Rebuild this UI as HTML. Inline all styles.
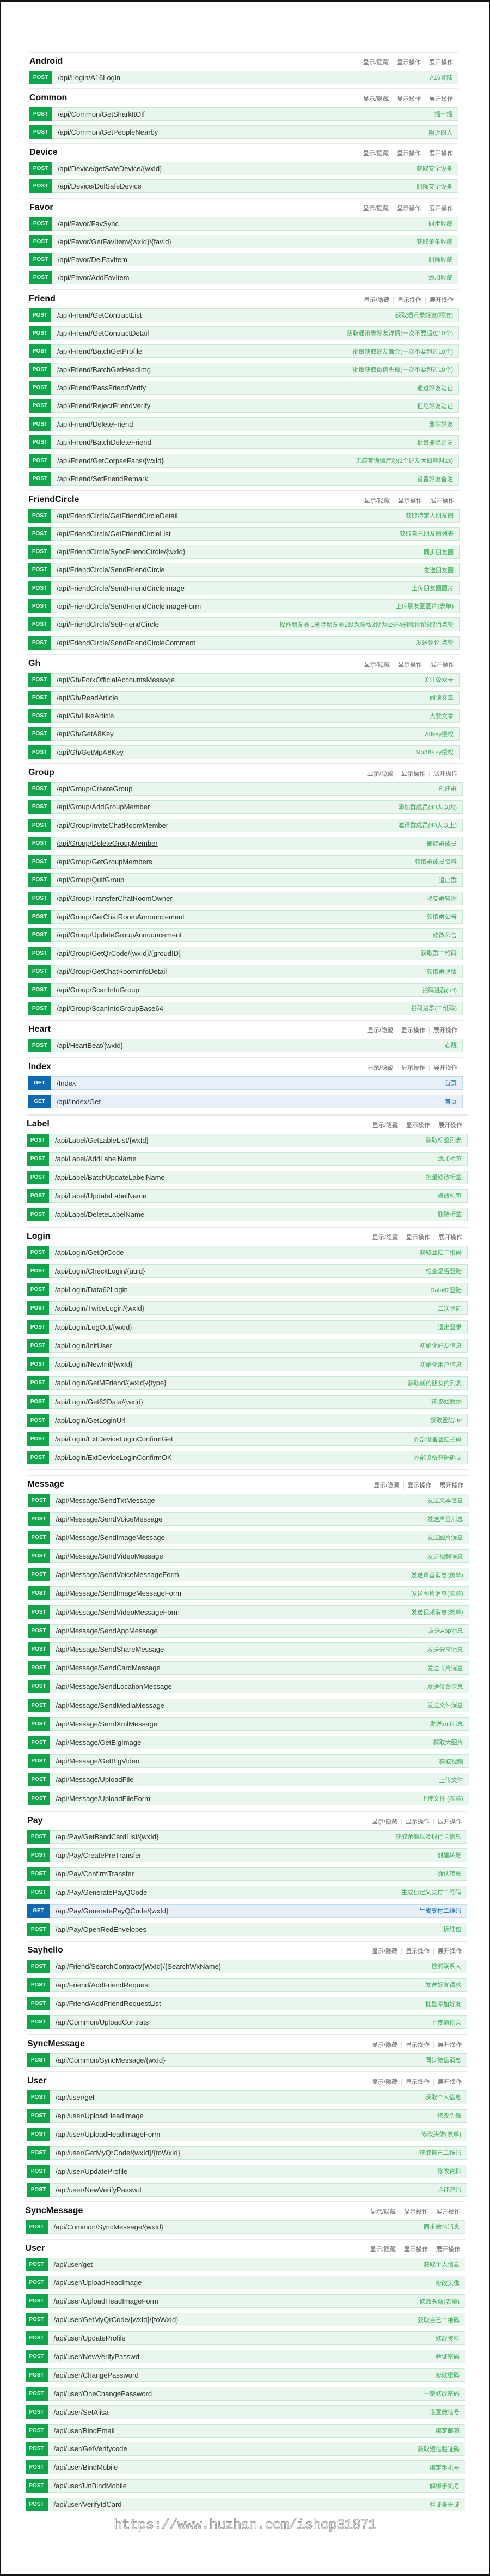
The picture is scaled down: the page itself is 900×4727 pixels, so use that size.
<!DOCTYPE html>
<html><head><meta charset="utf-8">
<style>
html,body{margin:0;padding:0;background:#fff}
body{width:900px;height:4727px;position:relative;overflow:hidden;font-family:"Liberation Sans","Noto Sans CJK SC",sans-serif}
.frame{position:absolute;left:0;top:0;width:900px;height:4727px;box-sizing:border-box;border:2px solid #111;border-top-width:3px;border-bottom-width:3px}
.s{position:absolute}
.ln{height:2px;background:#e9e9e9}
.h{height:32.5px;position:relative}
.h b{position:absolute;left:0;top:1px;font:bold 16px/30px "Liberation Sans","Noto Sans CJK SC",sans-serif;color:#111}
.lk{position:absolute;right:10px;top:10px;font-size:11px;color:#666;line-height:16px;white-space:nowrap}
.lk span+span{border-left:1px solid #ddd;margin-left:7px;padding-left:7px}
.r{height:25px;box-sizing:border-box;border:1px solid #c7e9d4;background:#e8f6ee;display:flex;align-items:center;margin-bottom:calc(var(--p) - 25px);white-space:nowrap}
.m{width:41px;height:25px;margin:-1px 0 -1px -1px;background:#10a54a;color:#fff;font:bold 10px/25px "Liberation Sans",sans-serif;text-align:center;flex:none}
.pa{margin-left:11px;font-size:13px;color:#333}
.d{margin-left:auto;padding-right:10px;font-size:11px;color:#3fa95b}
.g{border-color:#c3d9ec;background:#e7eff8}
.g .m{background:#0f6ab4}
.g .d{color:#0f6ab4}
.u{text-decoration:underline}
.wm{position:absolute;left:0;width:900px;top:4617px;text-align:center;font:26px/32px "Liberation Mono",monospace;color:#f4f4f4;-webkit-text-stroke:1px #9a9a9a;letter-spacing:-1px}
</style></head><body>
<div class="frame"></div>

<div class="s" style="top:95px;left:54px;width:788px;--p:33.5px">
<div class="ln"></div><div class="h"><b>Android</b><div class="lk"><span>显示/隐藏</span><span>显示操作</span><span>展开操作</span></div></div>
<div class="r"><div class="m">POST</div><div class="pa">/api/Login/A16Login</div><div class="d">A16登陆</div></div>
</div>

<div class="s" style="top:162px;left:54px;width:788px;--p:33.5px">
<div class="ln"></div><div class="h"><b>Common</b><div class="lk"><span>显示/隐藏</span><span>显示操作</span><span>展开操作</span></div></div>
<div class="r"><div class="m">POST</div><div class="pa">/api/Common/GetSharkItOff</div><div class="d">摇一摇</div></div>
<div class="r"><div class="m">POST</div><div class="pa">/api/Common/GetPeopleNearby</div><div class="d">附近的人</div></div>
</div>

<div class="s" style="top:262px;left:54px;width:788px;--p:32.7px">
<div class="ln"></div><div class="h"><b>Device</b><div class="lk"><span>显示/隐藏</span><span>显示操作</span><span>展开操作</span></div></div>
<div class="r"><div class="m">POST</div><div class="pa">/api/Device/getSafeDevice/{wxId}</div><div class="d">获取安全设备</div></div>
<div class="r"><div class="m">POST</div><div class="pa">/api/Device/DelSafeDevice</div><div class="d">删除安全设备</div></div>
</div>

<div class="s" style="top:363px;left:54px;width:788px;--p:33px">
<div class="ln"></div><div class="h"><b>Favor</b><div class="lk"><span>显示/隐藏</span><span>显示操作</span><span>展开操作</span></div></div>
<div class="r"><div class="m">POST</div><div class="pa">/api/Favor/FavSync</div><div class="d">同步收藏</div></div>
<div class="r"><div class="m">POST</div><div class="pa">/api/Favor/GetFavItem/{wxId}/{favId}</div><div class="d">获取单条收藏</div></div>
<div class="r"><div class="m">POST</div><div class="pa">/api/Favor/DelFavItem</div><div class="d">删除收藏</div></div>
<div class="r"><div class="m">POST</div><div class="pa">/api/Favor/AddFavItem</div><div class="d">添加收藏</div></div>
</div>

<div class="s" style="top:531px;left:53px;width:790px;--p:33.4px">
<div class="ln"></div><div class="h"><b>Friend</b><div class="lk"><span>显示/隐藏</span><span>显示操作</span><span>展开操作</span></div></div>
<div class="r"><div class="m">POST</div><div class="pa">/api/Friend/GetContractList</div><div class="d">获取通讯录好友(精准)</div></div>
<div class="r"><div class="m">POST</div><div class="pa">/api/Friend/GetContractDetail</div><div class="d">获取通讯录好友详情(一次不要超过10个)</div></div>
<div class="r"><div class="m">POST</div><div class="pa">/api/Friend/BatchGetProfile</div><div class="d">批量获取好友简介(一次不要超过10个)</div></div>
<div class="r"><div class="m">POST</div><div class="pa">/api/Friend/BatchGetHeadImg</div><div class="d">批量获取微信头像(一次不要超过10个)</div></div>
<div class="r"><div class="m">POST</div><div class="pa">/api/Friend/PassFriendVerify</div><div class="d">通过好友验证</div></div>
<div class="r"><div class="m">POST</div><div class="pa">/api/Friend/RejectFriendVerify</div><div class="d">拒绝好友验证</div></div>
<div class="r"><div class="m">POST</div><div class="pa">/api/Friend/DeleteFriend</div><div class="d">删除好友</div></div>
<div class="r"><div class="m">POST</div><div class="pa">/api/Friend/BatchDeleteFriend</div><div class="d">批量删除好友</div></div>
<div class="r"><div class="m">POST</div><div class="pa">/api/Friend/GetCorpseFans/{wxId}</div><div class="d">无痕查询僵尸粉(1个好友大概耗时1s)</div></div>
<div class="r"><div class="m">POST</div><div class="pa">/api/Friend/SetFriendRemark</div><div class="d">设置好友备注</div></div>
</div>

<div class="s" style="top:899px;left:52px;width:792px;--p:33.3px">
<div class="ln"></div><div class="h"><b>FriendCircle</b><div class="lk"><span>显示/隐藏</span><span>显示操作</span><span>展开操作</span></div></div>
<div class="r"><div class="m">POST</div><div class="pa">/api/FriendCircle/GetFriendCircleDetail</div><div class="d">获取特定人朋友圈</div></div>
<div class="r"><div class="m">POST</div><div class="pa">/api/FriendCircle/GetFriendCircleList</div><div class="d">获取自己朋友圈列表</div></div>
<div class="r"><div class="m">POST</div><div class="pa">/api/FriendCircle/SyncFriendCircle/{wxId}</div><div class="d">同步朋友圈</div></div>
<div class="r"><div class="m">POST</div><div class="pa">/api/FriendCircle/SendFriendCircle</div><div class="d">发送朋友圈</div></div>
<div class="r"><div class="m">POST</div><div class="pa">/api/FriendCircle/SendFriendCircleImage</div><div class="d">上传朋友圈图片</div></div>
<div class="r"><div class="m">POST</div><div class="pa">/api/FriendCircle/SendFriendCircleImageForm</div><div class="d">上传朋友圈图片(表单)</div></div>
<div class="r"><div class="m">POST</div><div class="pa">/api/FriendCircle/SetFriendCircle</div><div class="d">操作朋友圈 1删除朋友圈2设为隐私3设为公开4删除评论5取消点赞</div></div>
<div class="r"><div class="m">POST</div><div class="pa">/api/FriendCircle/SendFriendCircleComment</div><div class="d">发送评论 点赞</div></div>
</div>

<div class="s" style="top:1200px;left:52px;width:792px;--p:33.25px">
<div class="ln"></div><div class="h"><b>Gh</b><div class="lk"><span>显示/隐藏</span><span>显示操作</span><span>展开操作</span></div></div>
<div class="r"><div class="m">POST</div><div class="pa">/api/Gh/ForkOfficialAccountsMessage</div><div class="d">关注公众号</div></div>
<div class="r"><div class="m">POST</div><div class="pa">/api/Gh/ReadArticle</div><div class="d">阅读文章</div></div>
<div class="r"><div class="m">POST</div><div class="pa">/api/Gh/LikeArticle</div><div class="d">点赞文章</div></div>
<div class="r"><div class="m">POST</div><div class="pa">/api/Gh/GetA8Key</div><div class="d">A8key授权</div></div>
<div class="r"><div class="m">POST</div><div class="pa">/api/Gh/GetMpA8Key</div><div class="d">MpA8Key授权</div></div>
</div>

<div class="s" style="top:1400px;left:52px;width:798px;--p:33.6px">
<div class="ln"></div><div class="h"><b>Group</b><div class="lk"><span>显示/隐藏</span><span>显示操作</span><span>展开操作</span></div></div>
<div class="r"><div class="m">POST</div><div class="pa">/api/Group/CreateGroup</div><div class="d">创建群</div></div>
<div class="r"><div class="m">POST</div><div class="pa">/api/Group/AddGroupMember</div><div class="d">添加群成员(40人以内)</div></div>
<div class="r"><div class="m">POST</div><div class="pa">/api/Group/InviteChatRoomMember</div><div class="d">邀请群成员(40人以上)</div></div>
<div class="r"><div class="m">POST</div><div class="pa u">/api/Group/DeleteGroupMember</div><div class="d">删除群成员</div></div>
<div class="r"><div class="m">POST</div><div class="pa">/api/Group/GetGroupMembers</div><div class="d">获取群成员资料</div></div>
<div class="r"><div class="m">POST</div><div class="pa">/api/Group/QuitGroup</div><div class="d">退出群</div></div>
<div class="r"><div class="m">POST</div><div class="pa">/api/Group/TransferChatRoomOwner</div><div class="d">移交群管理</div></div>
<div class="r"><div class="m">POST</div><div class="pa">/api/Group/GetChatRoomAnnouncement</div><div class="d">获取群公告</div></div>
<div class="r"><div class="m">POST</div><div class="pa">/api/Group/UpdateGroupAnnouncement</div><div class="d">修改公告</div></div>
<div class="r"><div class="m">POST</div><div class="pa">/api/Group/GetQrCode/{wxId}/{groudID}</div><div class="d">获取群二维码</div></div>
<div class="r"><div class="m">POST</div><div class="pa">/api/Group/GetChatRoomInfoDetail</div><div class="d">获取群详情</div></div>
<div class="r"><div class="m">POST</div><div class="pa">/api/Group/ScanIntoGroup</div><div class="d">扫码进群(url)</div></div>
<div class="r"><div class="m">POST</div><div class="pa">/api/Group/ScanIntoGroupBase64</div><div class="d">扫码进群(二维码)</div></div>
</div>

<div class="s" style="top:1871px;left:52px;width:798px;--p:34px">
<div class="ln"></div><div class="h"><b>Heart</b><div class="lk"><span>显示/隐藏</span><span>显示操作</span><span>展开操作</span></div></div>
<div class="r"><div class="m">POST</div><div class="pa">/api/HeartBeat/{wxId}</div><div class="d">心跳</div></div>
</div>

<div class="s" style="top:1940px;left:52px;width:798px;--p:34px">
<div class="ln"></div><div class="h"><b>Index</b><div class="lk"><span>显示/隐藏</span><span>显示操作</span><span>展开操作</span></div></div>
<div class="r g"><div class="m">GET</div><div class="pa">/Index</div><div class="d">首页</div></div>
<div class="r g"><div class="m">GET</div><div class="pa">/api/Index/Get</div><div class="d">首页</div></div>
</div>

<div class="s" style="top:2045px;left:49px;width:810px;--p:34px">
<div class="ln"></div><div class="h"><b>Label</b><div class="lk"><span>显示/隐藏</span><span>显示操作</span><span>展开操作</span></div></div>
<div class="r"><div class="m">POST</div><div class="pa">/api/Label/GetLableList/{wxId}</div><div class="d">获取标签列表</div></div>
<div class="r"><div class="m">POST</div><div class="pa">/api/Label/AddLabelName</div><div class="d">添加标签</div></div>
<div class="r"><div class="m">POST</div><div class="pa">/api/Label/BatchUpdateLabelName</div><div class="d">批量修改标签</div></div>
<div class="r"><div class="m">POST</div><div class="pa">/api/Label/UpdateLabelName</div><div class="d">修改标签</div></div>
<div class="r"><div class="m">POST</div><div class="pa">/api/Label/DeleteLabelName</div><div class="d">删除标签</div></div>
</div>

<div class="s" style="top:2251px;left:49px;width:810px;--p:34.27px">
<div class="ln"></div><div class="h"><b>Login</b><div class="lk"><span>显示/隐藏</span><span>显示操作</span><span>展开操作</span></div></div>
<div class="r"><div class="m">POST</div><div class="pa">/api/Login/GetQrCode</div><div class="d">获取登陆二维码</div></div>
<div class="r"><div class="m">POST</div><div class="pa">/api/Login/CheckLogin/{uuid}</div><div class="d">检查是否登陆</div></div>
<div class="r"><div class="m">POST</div><div class="pa">/api/Login/Data62Login</div><div class="d">Data62登陆</div></div>
<div class="r"><div class="m">POST</div><div class="pa">/api/Login/TwiceLogin/{wxId}</div><div class="d">二次登陆</div></div>
<div class="r"><div class="m">POST</div><div class="pa">/api/Login/LogOut/{wxId}</div><div class="d">退出登录</div></div>
<div class="r"><div class="m">POST</div><div class="pa">/api/Login/InitUser</div><div class="d">初始化好友信息</div></div>
<div class="r"><div class="m">POST</div><div class="pa">/api/Login/NewInit/{wxId}</div><div class="d">初始化用户信息</div></div>
<div class="r"><div class="m">POST</div><div class="pa">/api/Login/GetMFriend/{wxId}/{type}</div><div class="d">获取新的朋友的列表</div></div>
<div class="r"><div class="m">POST</div><div class="pa">/api/Login/Get62Data/{wxId}</div><div class="d">获取62数据</div></div>
<div class="r"><div class="m">POST</div><div class="pa">/api/Login/GetLoginUrl</div><div class="d">获取登陆Url</div></div>
<div class="r"><div class="m">POST</div><div class="pa">/api/Login/ExtDeviceLoginConfirmGet</div><div class="d">外部设备登陆扫码</div></div>
<div class="r"><div class="m">POST</div><div class="pa">/api/Login/ExtDeviceLoginConfirmOK</div><div class="d">外部设备登陆确认</div></div>
</div>

<div class="s" style="top:2695px;left:49px;width:810px"><div class="ln"></div></div>
<div class="s" style="top:2706px;left:50.5px;width:811px;--p:34.19px">
<div class="ln"></div><div class="h"><b>Message</b><div class="lk"><span>显示/隐藏</span><span>显示操作</span><span>展开操作</span></div></div>
<div class="r"><div class="m">POST</div><div class="pa">/api/Message/SendTxtMessage</div><div class="d">发送文本信息</div></div>
<div class="r"><div class="m">POST</div><div class="pa">/api/Message/SendVoiceMessage</div><div class="d">发送声音消息</div></div>
<div class="r"><div class="m">POST</div><div class="pa">/api/Message/SendImageMessage</div><div class="d">发送图片消息</div></div>
<div class="r"><div class="m">POST</div><div class="pa">/api/Message/SendVideoMessage</div><div class="d">发送视频消息</div></div>
<div class="r"><div class="m">POST</div><div class="pa">/api/Message/SendVoiceMessageForm</div><div class="d">发送声音消息(表单)</div></div>
<div class="r"><div class="m">POST</div><div class="pa">/api/Message/SendImageMessageForm</div><div class="d">发送图片消息(表单)</div></div>
<div class="r"><div class="m">POST</div><div class="pa">/api/Message/SendVideoMessageForm</div><div class="d">发送视频消息(表单)</div></div>
<div class="r"><div class="m">POST</div><div class="pa">/api/Message/SendAppMessage</div><div class="d">发送App消息</div></div>
<div class="r"><div class="m">POST</div><div class="pa">/api/Message/SendShareMessage</div><div class="d">发送分享消息</div></div>
<div class="r"><div class="m">POST</div><div class="pa">/api/Message/SendCardMessage</div><div class="d">发送卡片消息</div></div>
<div class="r"><div class="m">POST</div><div class="pa">/api/Message/SendLocationMessage</div><div class="d">发送位置信息</div></div>
<div class="r"><div class="m">POST</div><div class="pa">/api/Message/SendMediaMessage</div><div class="d">发送文件消息</div></div>
<div class="r"><div class="m">POST</div><div class="pa">/api/Message/SendXmlMessage</div><div class="d">发送xml消息</div></div>
<div class="r"><div class="m">POST</div><div class="pa">/api/Message/GetBigImage</div><div class="d">获取大图片</div></div>
<div class="r"><div class="m">POST</div><div class="pa">/api/Message/GetBigVideo</div><div class="d">获取视频</div></div>
<div class="r"><div class="m">POST</div><div class="pa">/api/Message/UploadFile</div><div class="d">上传文件</div></div>
<div class="r"><div class="m">POST</div><div class="pa">/api/Message/UploadFileForm</div><div class="d">上传文件 (表单)</div></div>
</div>

<div class="s" style="top:3323px;left:50px;width:808px;--p:34px">
<div class="ln"></div><div class="h"><b>Pay</b><div class="lk"><span>显示/隐藏</span><span>显示操作</span><span>展开操作</span></div></div>
<div class="r"><div class="m">POST</div><div class="pa">/api/Pay/GetBandCardList/{wxId}</div><div class="d">获取余额以及银行卡信息</div></div>
<div class="r"><div class="m">POST</div><div class="pa">/api/Pay/CreatePreTransfer</div><div class="d">创建转账</div></div>
<div class="r"><div class="m">POST</div><div class="pa">/api/Pay/ConfirmTransfer</div><div class="d">确认转账</div></div>
<div class="r"><div class="m">POST</div><div class="pa">/api/Pay/GeneratePayQCode</div><div class="d">生成自定义支付二维码</div></div>
<div class="r g"><div class="m">GET</div><div class="pa">/api/Pay/GeneratePayQCode/{wxId}</div><div class="d">生成支付二维码</div></div>
<div class="r"><div class="m">POST</div><div class="pa">/api/Pay/OpenRedEnvelopes</div><div class="d">拆红包</div></div>
</div>

<div class="s" style="top:3561px;left:50px;width:808px;--p:34.3px">
<div class="ln"></div><div class="h"><b>Sayhello</b><div class="lk"><span>显示/隐藏</span><span>显示操作</span><span>展开操作</span></div></div>
<div class="r"><div class="m">POST</div><div class="pa">/api/Friend/SearchContract/{WxId}/{SearchWxName}</div><div class="d">搜索联系人</div></div>
<div class="r"><div class="m">POST</div><div class="pa">/api/Friend/AddFriendRequest</div><div class="d">发送好友请求</div></div>
<div class="r"><div class="m">POST</div><div class="pa">/api/Friend/AddFriendRequestList</div><div class="d">批量添加好友</div></div>
<div class="r"><div class="m">POST</div><div class="pa">/api/Common/UploadContrats</div><div class="d">上传通讯录</div></div>
</div>

<div class="s" style="top:3733px;left:50px;width:808px;--p:34px">
<div class="ln"></div><div class="h"><b>SyncMessage</b><div class="lk"><span>显示/隐藏</span><span>显示操作</span><span>展开操作</span></div></div>
<div class="r"><div class="m">POST</div><div class="pa">/api/Common/SyncMessage/{wxId}</div><div class="d">同步微信消息</div></div>
</div>

<div class="s" style="top:3801px;left:50px;width:808px;--p:34.1px">
<div class="ln"></div><div class="h"><b>User</b><div class="lk"><span>显示/隐藏</span><span>显示操作</span><span>展开操作</span></div></div>
<div class="r"><div class="m">POST</div><div class="pa">/api/user/get</div><div class="d">获取个人信息</div></div>
<div class="r"><div class="m">POST</div><div class="pa">/api/user/UploadHeadImage</div><div class="d">修改头像</div></div>
<div class="r"><div class="m">POST</div><div class="pa">/api/user/UploadHeadImageForm</div><div class="d">修改头像(表单)</div></div>
<div class="r"><div class="m">POST</div><div class="pa">/api/user/GetMyQrCode/{wxId}/{toWxId}</div><div class="d">获取自己二维码</div></div>
<div class="r"><div class="m">POST</div><div class="pa">/api/user/UpdateProfile</div><div class="d">修改资料</div></div>
<div class="r"><div class="m">POST</div><div class="pa">/api/user/NewVerifyPasswd</div><div class="d">验证密码</div></div>
</div>

<div class="s" style="top:4039px;left:46.5px;width:808.5px;--p:34px">
<div class="ln"></div><div class="h"><b>SyncMessage</b><div class="lk"><span>显示/隐藏</span><span>显示操作</span><span>展开操作</span></div></div>
<div class="r"><div class="m">POST</div><div class="pa">/api/Common/SyncMessage/{wxId}</div><div class="d">同步微信消息</div></div>
</div>

<div class="s" style="top:4108px;left:46.5px;width:808.5px;--p:33.9px">
<div class="ln"></div><div class="h"><b>User</b><div class="lk"><span>显示/隐藏</span><span>显示操作</span><span>展开操作</span></div></div>
<div class="r"><div class="m">POST</div><div class="pa">/api/user/get</div><div class="d">获取个人信息</div></div>
<div class="r"><div class="m">POST</div><div class="pa">/api/user/UploadHeadImage</div><div class="d">修改头像</div></div>
<div class="r"><div class="m">POST</div><div class="pa">/api/user/UploadHeadImageForm</div><div class="d">修改头像(表单)</div></div>
<div class="r"><div class="m">POST</div><div class="pa">/api/user/GetMyQrCode/{wxId}/{toWxId}</div><div class="d">获取自己二维码</div></div>
<div class="r"><div class="m">POST</div><div class="pa">/api/user/UpdateProfile</div><div class="d">修改资料</div></div>
<div class="r"><div class="m">POST</div><div class="pa">/api/user/NewVerifyPasswd</div><div class="d">验证密码</div></div>
<div class="r"><div class="m">POST</div><div class="pa">/api/user/ChangePassword</div><div class="d">修改密码</div></div>
<div class="r"><div class="m">POST</div><div class="pa">/api/user/OneChangePassword</div><div class="d">一键修改密码</div></div>
<div class="r"><div class="m">POST</div><div class="pa">/api/user/SetAlisa</div><div class="d">设置微信号</div></div>
<div class="r"><div class="m">POST</div><div class="pa">/api/user/BindEmail</div><div class="d">绑定邮箱</div></div>
<div class="r"><div class="m">POST</div><div class="pa">/api/user/GetVerifycode</div><div class="d">获取短信验证码</div></div>
<div class="r"><div class="m">POST</div><div class="pa">/api/user/BindMobile</div><div class="d">绑定手机号</div></div>
<div class="r"><div class="m">POST</div><div class="pa">/api/user/UnBindMobile</div><div class="d">解绑手机号</div></div>
<div class="r"><div class="m">POST</div><div class="pa">/api/user/VerifyIdCard</div><div class="d">验证身份证</div></div>
</div>

<div class="wm">https://www.huzhan.com/ishop31871</div>
</body></html>
